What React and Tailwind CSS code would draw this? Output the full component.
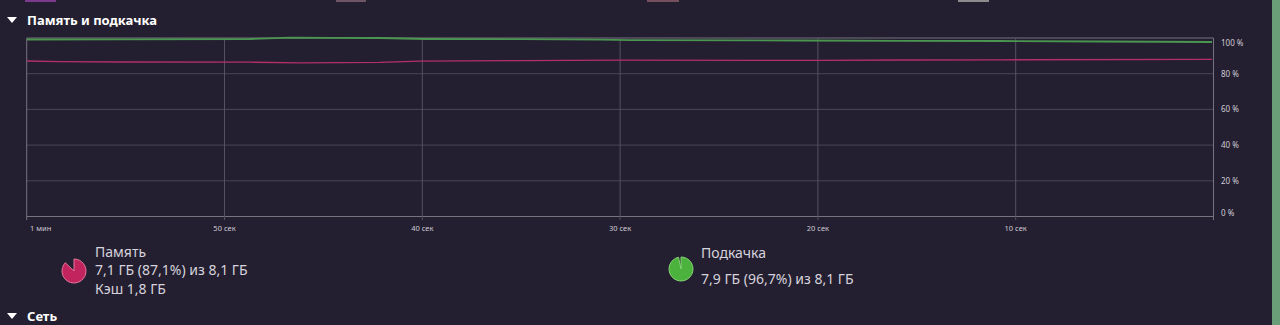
const gridY = [39, 74.7, 110.4, 146.1, 181.8, 217.5];
const gridX = [26.7, 224.5, 422.3, 620.1, 817.9, 1015.7, 1213.5];
const pctLabels = ["100 %", "80 %", "60 %", "40 %", "20 %", "0 %"];
const timeLabels = ["1 мин", "50 сек", "40 сек", "30 сек", "20 сек", "10 сек"];
// labels at the edges sit inside the plot box
const labelShift = [5, 0, 0, 0, 0, -4];

const greenLine =
  "M27 40.5 L120 40.3 L250 40 L290 38.6 L330 38.8 L380 39 L425 40 L520 40.2 L600 40.6 L630 41.2 L800 41.5 L900 41.8 L1000 42 L1100 42.5 L1212 43";
const pinkLine =
  "M27 62 L60 62.6 L120 63 L250 63.2 L300 63.8 L380 63.4 L420 62.2 L520 61.6 L620 61.2 L820 61.4 L900 61 L1000 60.8 L1212 60.4";

function Caret() {
  return (
    <svg width="10" height="6" viewBox="0 0 10 6" className="shrink-0">
      <path d="M0 0 L10 0 L5 6 Z" fill="#ffffff" />
    </svg>
  );
}

function SectionHeader({ title }) {
  return (
    <div className="flex items-center gap-[10px] pl-[7px] h-[18px]">
      <Caret />
      <span className="text-[13px] font-bold text-white leading-[18px]">{title}</span>
    </div>
  );
}

function Pie({ fill, stroke, end }) {
  return (
    <svg width="28" height="28" viewBox="0 0 28 28" className="shrink-0">
      <path
        d={`M14 14 L14 2 A12 12 0 1 1 ${end} Z`}
        fill={fill}
        stroke={stroke}
        strokeWidth="1"
        strokeLinejoin="round"
      />
    </svg>
  );
}

function Chart() {
  return (
    <svg width="1272" height="204" viewBox="0 32 1272 204" className="block">
      {gridY.map((y, i) => (
        <line
          key={"h" + i}
          x1="26.7"
          x2="1213.5"
          y1={y}
          y2={y}
          stroke={i === 0 || i === 5 ? "#77737f" : "#4b4757"}
          strokeWidth="1"
        />
      ))}
      {gridX.map((x, i) => (
        <line
          key={"v" + i}
          x1={x}
          x2={x}
          y1="39"
          y2="221"
          stroke={i === 0 || i === 6 ? "#77737f" : "#55515f"}
          strokeWidth="1"
        />
      ))}
      <path d={greenLine} fill="none" stroke="#4a9550" strokeWidth="1.8" />
      <path d={pinkLine} fill="none" stroke="#b32f68" strokeWidth="1.3" />
      {pctLabels.map((t, i) => (
        <text
          key={t}
          x="1221"
          y={gridY[i] + labelShift[i] + 3}
          fontSize="8"
          fill="#cfcbd6"
          fontFamily="'Noto Sans', sans-serif"
        >
          {t}
        </text>
      ))}
      {timeLabels.map((t, i) => (
        <text
          key={t}
          x={i === 0 ? 30 : gridX[i]}
          y="232"
          fontSize="7.5"
          fill="#cfcbd6"
          textAnchor={i === 0 ? "start" : "middle"}
          fontFamily="'Noto Sans', sans-serif"
        >
          {t}
        </text>
      ))}
    </svg>
  );
}

export default function App() {
  return (
    <div
      className="w-[1280px] h-[325px] bg-[#241f30] flex overflow-hidden"
      style={{ fontFamily: "'Noto Sans', sans-serif" }}
    >
      <div className="flex-1 flex flex-col">
        {/* legend swatches from the section above */}
        <div className="flex h-[3px]">
          <div className="ml-[25px] w-[31px] bg-[#7b3a8e]" />
          <div className="ml-[280px] w-[30px] bg-[#6e5565]" />
          <div className="ml-[281px] w-[32px] bg-[#74515c]" />
          <div className="ml-[279px] w-[31px] bg-[#8f8a8c]" />
        </div>

        <div className="mt-[9px]">
          <SectionHeader title="Память и подкачка" />
        </div>

        <div className="mt-[2px]">
          <Chart />
        </div>

        <div className="flex items-start mt-[8px] h-[56px] text-[14px] leading-[18.5px] text-[#d6d3dc]">
          <div className="flex items-start gap-[7px] pl-[60px] w-[667px]">
            <div className="mt-[14px]">
              <Pie fill="#c2245e" stroke="#e5789c" end="5.31 5.73" />
            </div>
            <div className="flex flex-col">
              <span>Память</span>
              <span>7,1 ГБ (87,1%) из 8,1 ГБ</span>
              <span>Кэш 1,8 ГБ</span>
            </div>
          </div>
          <div className="flex items-start gap-[6px]">
            <div className="mt-[12px]">
              <Pie fill="#4cb23e" stroke="#86d276" end="11.53 2.26" />
            </div>
            <div className="flex flex-col mt-[1px]">
              <span>Подкачка</span>
              <span className="mt-[8px]">7,9 ГБ (96,7%) из 8,1 ГБ</span>
            </div>
          </div>
        </div>

        <div className="mt-[9px]">
          <SectionHeader title="Сеть" />
        </div>
      </div>
      <div className="w-[8px] bg-[#6a9e78]" />
    </div>
  );
}
